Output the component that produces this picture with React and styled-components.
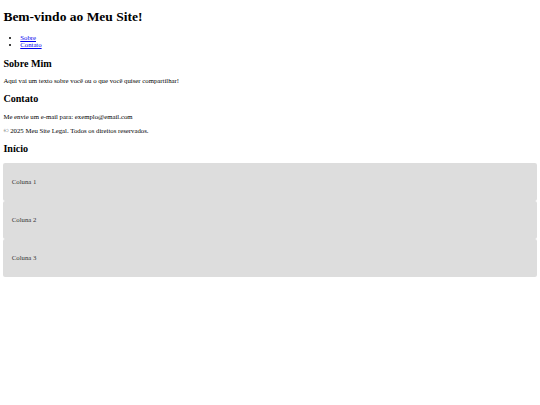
import * as React from "react";
import styled, { createGlobalStyle } from "styled-components";

// the reference is a 1280px wide page shown at 540px
const s = 540 / 1280;
const px = (v) => `${v * s}px`;

const GlobalStyle = createGlobalStyle`
  html, body {
    background: #fff;
  }
  body {
    margin: ${px(8)};
    font-family: "Liberation Serif", "Times New Roman", serif;
    font-size: ${px(16)};
    line-height: 1.15;
    color: #000;
  }
`;

export default function App() {
  return (
    <>
      <GlobalStyle />
      <header>
        <Title>Bem-vindo ao Meu Site!</Title>
        <Nav>
          <li><NavLink href="#sobre">Sobre</NavLink></li>
          <li><NavLink href="#contato">Contato</NavLink></li>
        </Nav>
      </header>
      <section id="sobre">
        <Heading>Sobre Mim</Heading>
        <Text>Aqui vai um texto sobre você ou o que você quiser compartilhar!</Text>
      </section>
      <section id="contato">
        <Heading>Contato</Heading>
        <Text>Me envie um e-mail para: exemplo@email.com</Text>
      </section>
      <footer>
        <Text>© 2025 Meu Site Legal. Todos os direitos reservados.</Text>
      </footer>
      <Heading>Início</Heading>
      <Columns>
        <Column><Text>Coluna 1</Text></Column>
        <Column><Text>Coluna 2</Text></Column>
        <Column><Text>Coluna 3</Text></Column>
      </Columns>
    </>
  );
}

const Title = styled.h1`
  font-size: ${px(32)};
  font-weight: 700;
  margin: ${px(13.6)} 0 ${px(21.44)};
`;

const Nav = styled.ul`
  margin: ${px(16)} 0;
  padding-left: ${px(40)};
  list-style: disc;
`;

const NavLink = styled.a`
  color: #0000ee;
  text-decoration: underline;
`;

const Heading = styled.h2`
  font-size: ${px(24)};
  font-weight: 700;
  line-height: 1.1;
  margin: ${px(19.92)} 0;
`;

const Text = styled.p`
  margin: ${px(16)} 0;
`;

const Columns = styled.div`
  display: flex;
  flex-direction: column;
`;

const Column = styled.div`
  display: flow-root;
  padding: ${px(20)};
  border-radius: ${px(5)};
  background-color: #ddd;
  color: #333;
`;
